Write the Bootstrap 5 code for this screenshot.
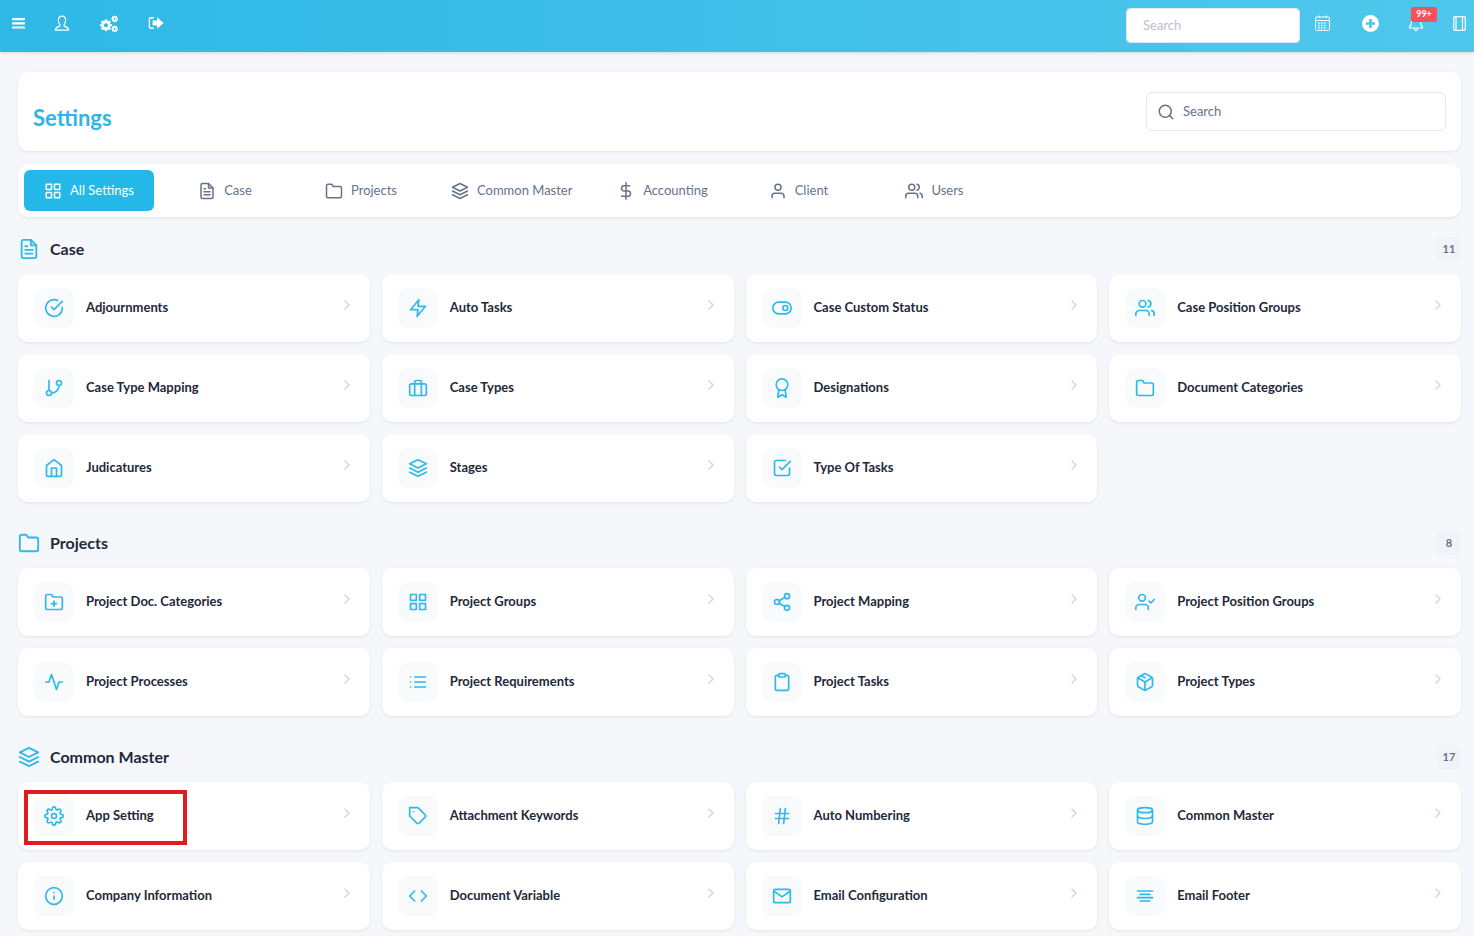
<!DOCTYPE html>
<html lang="en">
<head>
    <meta charset="UTF-8">
    <meta name="viewport" content="width=device-width, initial-scale=1.0">
    <title>Settings</title>
    <link href="https://cdn.jsdelivr.net/npm/bootstrap@5.3.3/dist/css/bootstrap.min.css" rel="stylesheet">
    <style>
        body {
            background: #f5f7fb;
            font-family: Lato, "Noto Sans", sans-serif;
            font-size: 13px;
            color: #1e293b;
        }
        svg.ico {
            fill: none;
            stroke: currentColor;
            stroke-width: 2;
            stroke-linecap: round;
            stroke-linejoin: round;
            flex-shrink: 0;
        }
        /* top bar */
        .topbar {
            height: 52px;
            padding: 0 8px 0 12px;
            background: linear-gradient(90deg, #2fb8e6, #4fc7ec);
            box-shadow: 0 1px 3px rgba(0, 0, 0, .14);
            color: #fff;
        }
        .topbar svg { fill: currentColor; flex-shrink: 0; }
        .top-left { gap: 29px; margin-top: -6px; }
        .top-right { gap: 32px; margin-top: -6px; }
        .top-search {
            width: 174px;
            height: 35px;
            margin: 4px -17px 0 0;
            padding: 0 16px;
            border: 1px solid #e2e8f0;
            border-radius: 4px;
            font-size: 13px;
        }
        .top-search::placeholder { color: #b9bfcc; }
        .bell-wrap { position: relative; line-height: 0; margin: 0 -3px 0 -3px; }
        .bell-count {
            position: absolute;
            top: -8px;
            left: 3px;
            width: 26px;
            height: 15px;
            border-radius: 2px;
            background: #f4525a;
            color: #fff;
            font-size: 9px;
            font-weight: 700;
            line-height: 14px;
            text-align: center;
        }
        /* page */
        .page { padding: 20px 13px 6px 18px; }
        .panel {
            border: 0;
            border-radius: 10px;
            background: #fff;
            box-shadow: 0 1px 3px rgba(15, 23, 42, .09);
        }
        .title-panel { height: 79px; padding: 20px 15px 0; margin-bottom: 13px; }
        .page-title {
            margin: 11px 0 0;
            font-size: 22px;
            font-weight: 700;
            line-height: 30px;
            color: #2fb5e6;
        }
        .find-box {
            width: 300px;
            height: 39px;
            padding: 0 10px;
            gap: 8px;
            border: 1px solid #e2e8f0;
            border-radius: 6px;
            color: #64748b;
        }
        .find-box input {
            width: 100%;
            border: 0;
            outline: 0;
            padding: 0;
            font-size: 13px;
            color: #64748b;
        }
        .find-box input::placeholder { color: #64748b; }
        .tab-panel { height: 53px; padding: 6px; gap: 6px; margin-bottom: 20px; }
        .tab-item {
            min-width: 130px;
            height: 41px;
            padding: 0 19px;
            gap: 8px;
            border-radius: 6px;
            color: #64748b;
            font-size: 13px;
            text-decoration: none;
        }
        .tab-item.active { background: #24b8e8; color: #fff; }
        .sec-head { height: 24px; margin-bottom: 13px; }
        .sec-head h2 {
            margin: 0;
            font-size: 16px;
            font-weight: 700;
            color: #1e293b;
        }
        .sec-icon { color: #30b8ea; margin-right: 10px; }
        .sec-count {
            min-width: 24px;
            height: 24px;
            border-radius: 5px;
            background: #f0f3f8;
            color: #64748b;
            font-size: 11px;
            font-weight: 700;
        }
        .setting-row { --bs-gutter-x: 12px; --bs-gutter-y: 12px; margin-bottom: 29px; }
        .setting-row.last-row { margin-bottom: 0; }
        .setting-card {
            flex-direction: row;
            align-items: center;
            height: 68px;
            padding: 0 15px 0 16px;
        }
        .setting-icon {
            width: 40px;
            height: 40px;
            margin-right: 12px;
            border-radius: 10px;
            background: #f8fafc;
            color: #30b8ea;
        }
        .setting-name { font-size: 13px; font-weight: 700; color: #1e293b; }
        .setting-go { margin: 0 0 6px auto; color: #cbd5e1; }
        .mark-box {
            position: absolute;
            left: 12px;
            top: 8px;
            width: 163px;
            height: 55px;
            border: 4px solid #e21b1f;
            pointer-events: none;
        }
    </style>
</head>
<body>

    <svg width="0" height="0" class="position-absolute">
        <symbol id="i-grid" viewBox="0 0 24 24"><rect x="3" y="3" width="7" height="7"/><rect x="14" y="3" width="7" height="7"/><rect x="14" y="14" width="7" height="7"/><rect x="3" y="14" width="7" height="7"/></symbol>
        <symbol id="i-file" viewBox="0 0 24 24"><path d="M14 2H6a2 2 0 0 0-2 2v16a2 2 0 0 0 2 2h12a2 2 0 0 0 2-2V8z"/><polyline points="14 2 14 8 20 8"/><line x1="16" y1="13" x2="8" y2="13"/><line x1="16" y1="17" x2="8" y2="17"/><polyline points="10 9 9 9 8 9"/></symbol>
        <symbol id="i-folder" viewBox="0 0 24 24"><path d="M22 19a2 2 0 0 1-2 2H4a2 2 0 0 1-2-2V5a2 2 0 0 1 2-2h5l2 3h9a2 2 0 0 1 2 2z"/></symbol>
        <symbol id="i-layers" viewBox="0 0 24 24"><polygon points="12 2 2 7 12 12 22 7 12 2"/><polyline points="2 17 12 22 22 17"/><polyline points="2 12 12 17 22 12"/></symbol>
        <symbol id="i-dollar" viewBox="0 0 24 24"><line x1="12" y1="1" x2="12" y2="23"/><path d="M17 5H9.5a3.5 3.5 0 0 0 0 7h5a3.5 3.5 0 0 1 0 7H6"/></symbol>
        <symbol id="i-user" viewBox="0 0 24 24"><path d="M20 21v-2a4 4 0 0 0-4-4H8a4 4 0 0 0-4 4v2"/><circle cx="12" cy="7" r="4"/></symbol>
        <symbol id="i-users" viewBox="0 0 24 24"><path d="M17 21v-2a4 4 0 0 0-4-4H5a4 4 0 0 0-4 4v2"/><circle cx="9" cy="7" r="4"/><path d="M23 21v-2a4 4 0 0 0-3-3.87"/><path d="M16 3.13a4 4 0 0 1 0 7.75"/></symbol>
        <symbol id="i-check-circle" viewBox="0 0 24 24"><path d="M22 11.08V12a10 10 0 1 1-5.93-9.14"/><polyline points="22 4 12 14.01 9 11.01"/></symbol>
        <symbol id="i-zap" viewBox="0 0 24 24"><polygon points="13 2 3 14 12 14 11 22 21 10 12 10 13 2"/></symbol>
        <symbol id="i-toggle" viewBox="0 0 24 24"><rect x="1" y="5" width="22" height="14" rx="7" ry="7"/><circle cx="16" cy="12" r="3"/></symbol>
        <symbol id="i-branch" viewBox="0 0 24 24"><line x1="6" y1="3" x2="6" y2="15"/><circle cx="18" cy="6" r="3"/><circle cx="6" cy="18" r="3"/><path d="M18 9a9 9 0 0 1-9 9"/></symbol>
        <symbol id="i-briefcase" viewBox="0 0 24 24"><rect x="2" y="7" width="20" height="14" rx="2" ry="2"/><path d="M16 21V5a2 2 0 0 0-2-2h-4a2 2 0 0 0-2 2v16"/></symbol>
        <symbol id="i-award" viewBox="0 0 24 24"><circle cx="12" cy="8" r="7"/><polyline points="8.21 13.89 7 23 12 20 17 23 15.79 13.88"/></symbol>
        <symbol id="i-home" viewBox="0 0 24 24"><path d="M3 9l9-7 9 7v11a2 2 0 0 1-2 2H5a2 2 0 0 1-2-2z"/><polyline points="9 22 9 12 15 12 15 22"/></symbol>
        <symbol id="i-check-square" viewBox="0 0 24 24"><polyline points="9 11 12 14 22 4"/><path d="M21 12v7a2 2 0 0 1-2 2H5a2 2 0 0 1-2-2V5a2 2 0 0 1 2-2h11"/></symbol>
        <symbol id="i-folder-plus" viewBox="0 0 24 24"><path d="M22 19a2 2 0 0 1-2 2H4a2 2 0 0 1-2-2V5a2 2 0 0 1 2-2h5l2 3h9a2 2 0 0 1 2 2z"/><line x1="12" y1="11" x2="12" y2="17"/><line x1="9" y1="14" x2="15" y2="14"/></symbol>
        <symbol id="i-share" viewBox="0 0 24 24"><circle cx="18" cy="5" r="3"/><circle cx="6" cy="12" r="3"/><circle cx="18" cy="19" r="3"/><line x1="8.59" y1="13.51" x2="15.42" y2="17.49"/><line x1="15.41" y1="6.51" x2="8.59" y2="10.49"/></symbol>
        <symbol id="i-user-check" viewBox="0 0 24 24"><path d="M16 21v-2a4 4 0 0 0-4-4H5a4 4 0 0 0-4 4v2"/><circle cx="8.5" cy="7" r="4"/><polyline points="17 11 19 13 23 9"/></symbol>
        <symbol id="i-activity" viewBox="0 0 24 24"><polyline points="22 12 18 12 15 21 9 3 6 12 2 12"/></symbol>
        <symbol id="i-list" viewBox="0 0 24 24"><line x1="8" y1="6" x2="21" y2="6"/><line x1="8" y1="12" x2="21" y2="12"/><line x1="8" y1="18" x2="21" y2="18"/><line x1="3" y1="6" x2="3.01" y2="6"/><line x1="3" y1="12" x2="3.01" y2="12"/><line x1="3" y1="18" x2="3.01" y2="18"/></symbol>
        <symbol id="i-clipboard" viewBox="0 0 24 24"><path d="M16 4h2a2 2 0 0 1 2 2v14a2 2 0 0 1-2 2H6a2 2 0 0 1-2-2V6a2 2 0 0 1 2-2h2"/><rect x="8" y="2" width="8" height="4" rx="1" ry="1"/></symbol>
        <symbol id="i-box" viewBox="0 0 24 24"><line x1="7.5" y1="4.21" x2="12" y2="6.81"/><path d="M21 16V8a2 2 0 0 0-1-1.73l-7-4a2 2 0 0 0-2 0l-7 4A2 2 0 0 0 3 8v8a2 2 0 0 0 1 1.73l7 4a2 2 0 0 0 2 0l7-4A2 2 0 0 0 21 16z"/><polyline points="3.27 6.96 12 12.01 20.73 6.96"/><line x1="12" y1="22.08" x2="12" y2="12"/></symbol>
        <symbol id="i-gear" viewBox="0 0 24 24"><circle cx="12" cy="12" r="3"/><path d="M19.4 15a1.65 1.65 0 0 0 .33 1.82l.06.06a2 2 0 0 1 0 2.83 2 2 0 0 1-2.83 0l-.06-.06a1.65 1.65 0 0 0-1.82-.33 1.65 1.65 0 0 0-1 1.51V21a2 2 0 0 1-2 2 2 2 0 0 1-2-2v-.09A1.65 1.65 0 0 0 9 19.4a1.65 1.65 0 0 0-1.82.33l-.06.06a2 2 0 0 1-2.83 0 2 2 0 0 1 0-2.83l.06-.06a1.65 1.65 0 0 0 .33-1.82 1.65 1.65 0 0 0-1.51-1H3a2 2 0 0 1-2-2 2 2 0 0 1 2-2h.09A1.65 1.65 0 0 0 4.6 9a1.65 1.65 0 0 0-.33-1.82l-.06-.06a2 2 0 0 1 0-2.83 2 2 0 0 1 2.83 0l.06.06a1.65 1.65 0 0 0 1.82.33H9a1.65 1.65 0 0 0 1-1.51V3a2 2 0 0 1 2-2 2 2 0 0 1 2 2v.09a1.65 1.65 0 0 0 1 1.51 1.65 1.65 0 0 0 1.82-.33l.06-.06a2 2 0 0 1 2.83 0 2 2 0 0 1 0 2.83l-.06.06a1.65 1.65 0 0 0-.33 1.82V9a1.65 1.65 0 0 0 1.51 1H21a2 2 0 0 1 2 2 2 2 0 0 1-2 2h-.09a1.65 1.65 0 0 0-1.51 1z"/></symbol>
        <symbol id="i-tag" viewBox="0 0 24 24"><path d="M20.59 13.41l-7.17 7.17a2 2 0 0 1-2.83 0L2 12V2h10l8.59 8.59a2 2 0 0 1 0 2.82z"/><line x1="7" y1="7" x2="7.01" y2="7"/></symbol>
        <symbol id="i-hash" viewBox="0 0 24 24"><line x1="4" y1="9" x2="20" y2="9"/><line x1="4" y1="15" x2="20" y2="15"/><line x1="10" y1="3" x2="8" y2="21"/><line x1="16" y1="3" x2="14" y2="21"/></symbol>
        <symbol id="i-database" viewBox="0 0 24 24"><ellipse cx="12" cy="5" rx="9" ry="3"/><path d="M21 12c0 1.66-4 3-9 3s-9-1.34-9-3"/><path d="M3 5v14c0 1.66 4 3 9 3s9-1.34 9-3V5"/></symbol>
        <symbol id="i-info" viewBox="0 0 24 24"><circle cx="12" cy="12" r="10"/><line x1="12" y1="16" x2="12" y2="12"/><line x1="12" y1="8" x2="12.01" y2="8"/></symbol>
        <symbol id="i-code" viewBox="0 0 24 24"><polyline points="16 18 22 12 16 6"/><polyline points="8 6 2 12 8 18"/></symbol>
        <symbol id="i-mail" viewBox="0 0 24 24"><path d="M4 4h16c1.1 0 2 .9 2 2v12c0 1.1-.9 2-2 2H4c-1.1 0-2-.9-2-2V6c0-1.1.9-2 2-2z"/><polyline points="22 6 12 13 2 6"/></symbol>
        <symbol id="i-align" viewBox="0 0 24 24"><line x1="18" y1="10" x2="6" y2="10"/><line x1="21" y1="6" x2="3" y2="6"/><line x1="21" y1="14" x2="3" y2="14"/><line x1="18" y1="18" x2="6" y2="18"/></symbol>
        <symbol id="i-search" viewBox="0 0 24 24"><circle cx="11" cy="11" r="8"/><line x1="21" y1="21" x2="16.65" y2="16.65"/></symbol>
        <symbol id="i-go" viewBox="0 0 24 24"><polyline points="9 18 15 12 9 6"/></symbol>
    </svg>

    <!-- Top bar -->
    <nav class="topbar d-flex align-items-center justify-content-between">
        <div class="top-left d-flex align-items-center">
            <svg width="13" height="11" viewBox="0 0 13 11"><rect width="13" height="2.2" rx=".6"/><rect y="4.2" width="13" height="2.2" rx=".6"/><rect y="8.4" width="13" height="2.2" rx=".6"/></svg>
            <svg width="16" height="16" viewBox="0 0 16 16" style="fill:none;stroke:currentColor;stroke-width:1.2"><path d="M5.9 9.6c-.9-1-1.5-2.6-1.5-4.2C4.4 3 5.9 1.2 8 1.2s3.600 1.800 3.600 4.200c0 1.600-.6 3.200-1.500 4.200v1.300c.6.500 4.300 1.300 4.500 3.900v.4H1.400v-.4c.2-2.600 3.900-3.400 4.500-3.900z"/></svg>
            <svg width="20" height="17" viewBox="0 0 20 17"><path fill-rule="evenodd" d="M6.200 4.300l1.500-.1.500 1.400 1.200.5 1.300-.7 1.100 1.100-.7 1.300.5 1.200 1.400.5v1.500l-1.400.5-.5 1.200.7 1.300-1.100 1.100-1.300-.7-1.200.5-.5 1.400H6.200l-.5-1.400-1.200-.5-1.300.7-1.100-1.100.7-1.300-.5-1.200L.9 11V9.500l1.400-.5.500-1.200-.7-1.300L3.200 5.400l1.300.7 1.200-.5zM7 8.200a2.100 2.100 0 1 0 0 4.200 2.100 2.100 0 0 0 0-4.200z"/><path fill-rule="evenodd" d="M15.200.4l1 .1.2.8.7.3.700-.5.700.7-.4.700.3.7.8.2v1l-.8.2-.3.7.4.700-.7.700-.7-.4-.7.3-.2.8h-1l-.2-.8-.7-.3-.7.4-.7-.7.4-.7-.3-.7-.8-.2v-1l.8-.2.3-.7-.4-.7.7-.7.7.4.7-.3zm.5 2.500a1 1 0 1 0 0 2 1 1 0 0 0 0-2z"/><path fill-rule="evenodd" d="M15.200 10.400l1 .1.200.8.700.3.700-.5.700.7-.4.700.3.7.8.2v1l-.8.2-.3.700.4.700-.7.700-.7-.4-.7.3-.2.800h-1l-.2-.8-.7-.3-.7.4-.7-.7.4-.7-.3-.7-.8-.2v-1l.8-.2.3-.7-.4-.7.7-.7.7.4.7-.3zm.5 2.500a1 1 0 1 0 0 2 1 1 0 0 0 0-2z"/></svg>
            <svg width="16" height="14" viewBox="0 0 16 14"><path d="M5.800 1.100H3C1.500 1.100.7 2 .7 3.300v7.400c0 1.300.8 2.200 2.300 2.200h2.800v-1.400H3c-.6 0-.9-.3-.9-.8V3.300c0-.5.3-.8.9-.8h2.800z"/><path d="M9.200 1.300L15.600 7l-6.400 5.700V9.400H4.600V4.600h4.600z"/></svg>
        </div>
        <div class="top-right d-flex align-items-center">
            <input class="top-search form-control" type="text" placeholder="Search">
            <svg width="15" height="16" viewBox="0 0 15 16" style="fill:none;stroke:currentColor;stroke-width:1"><rect x=".6" y="2" width="13.800" height="13.400" rx=".8"/><line x1=".6" y1="5.500" x2="14.400" y2="5.500"/><line x1="4" y1=".4" x2="4" y2="3"/><line x1="11" y1=".4" x2="11" y2="3"/><path stroke-width="1.500" stroke-dasharray="1.600 1.300" d="M3 8h9M3 10.500h9M3 13h9"/></svg>
            <svg width="17" height="17" viewBox="0 0 17 17"><path fill-rule="evenodd" d="M8.500 0a8.500 8.500 0 1 1 0 17 8.500 8.500 0 0 1 0-17zM7.200 4v3.200H4v2.600h3.200V13h2.600V9.800H13V7.200H9.800V4z"/></svg>
            <div class="bell-wrap">
                <svg width="16" height="16" viewBox="0 0 16 16" style="fill:none;stroke:currentColor;stroke-width:1.200"><path d="M8 1.500c-2.800 0-4.400 2-4.400 4.600 0 3.400-.9 4.800-2.100 5.900v1h13v-1c-1.200-1.100-2.100-2.500-2.100-5.900 0-2.600-1.600-4.600-4.400-4.600z"/><path d="M6.200 13.500c0 1.100.8 1.800 1.800 1.800s1.800-.7 1.800-1.800"/></svg>
                <span class="bell-count">99+</span>
            </div>
            <svg width="13" height="15" viewBox="0 0 13 15" style="fill:none;stroke:currentColor;stroke-width:1.200"><rect x=".7" y=".7" width="11.600" height="13.600" rx="1.400"/><line x1="3" y1=".7" x2="3" y2="14.300"/><line x1="9.500" y1=".7" x2="9.500" y2="14.300"/></svg>
        </div>
    </nav>

    <main class="page">

        <div class="panel title-panel d-flex justify-content-between align-items-start">
            <h1 class="page-title">Settings</h1>
            <div class="find-box d-flex align-items-center">
                <svg class="ico" width="18" height="18"><use href="#i-search"/></svg>
                <input type="text" placeholder="Search">
            </div>
        </div>

        <div class="panel tab-panel d-flex">
            <a class="tab-item active d-flex align-items-center justify-content-center" href="#"><svg class="ico" width="18" height="18"><use href="#i-grid"/></svg>All Settings</a>
            <a class="tab-item d-flex align-items-center justify-content-center" href="#"><svg class="ico" width="18" height="18"><use href="#i-file"/></svg>Case</a>
            <a class="tab-item d-flex align-items-center justify-content-center" href="#"><svg class="ico" width="18" height="18"><use href="#i-folder"/></svg>Projects</a>
            <a class="tab-item d-flex align-items-center justify-content-center" href="#"><svg class="ico" width="18" height="18"><use href="#i-layers"/></svg>Common Master</a>
            <a class="tab-item d-flex align-items-center justify-content-center" href="#"><svg class="ico" width="18" height="18"><use href="#i-dollar"/></svg>Accounting</a>
            <a class="tab-item d-flex align-items-center justify-content-center" href="#"><svg class="ico" width="18" height="18"><use href="#i-user"/></svg>Client</a>
            <a class="tab-item d-flex align-items-center justify-content-center" href="#"><svg class="ico" width="18" height="18"><use href="#i-users"/></svg>Users</a>
        </div>

        <!-- Case -->
        <div class="sec-head d-flex align-items-center">
            <svg class="ico sec-icon" width="22" height="22"><use href="#i-file"/></svg>
            <h2>Case</h2>
            <span class="sec-count ms-auto d-flex align-items-center justify-content-center">11</span>
        </div>
        <div class="row row-cols-4 setting-row">
            <div class="col"><div class="card panel setting-card"><div class="setting-icon d-flex align-items-center justify-content-center"><svg class="ico" width="20" height="20"><use href="#i-check-circle"/></svg></div><span class="setting-name">Adjournments</span><svg class="ico setting-go" width="16" height="16"><use href="#i-go"/></svg></div></div>
            <div class="col"><div class="card panel setting-card"><div class="setting-icon d-flex align-items-center justify-content-center"><svg class="ico" width="20" height="20"><use href="#i-zap"/></svg></div><span class="setting-name">Auto Tasks</span><svg class="ico setting-go" width="16" height="16"><use href="#i-go"/></svg></div></div>
            <div class="col"><div class="card panel setting-card"><div class="setting-icon d-flex align-items-center justify-content-center"><svg class="ico" width="20" height="20"><use href="#i-toggle"/></svg></div><span class="setting-name">Case Custom Status</span><svg class="ico setting-go" width="16" height="16"><use href="#i-go"/></svg></div></div>
            <div class="col"><div class="card panel setting-card"><div class="setting-icon d-flex align-items-center justify-content-center"><svg class="ico" width="20" height="20"><use href="#i-users"/></svg></div><span class="setting-name">Case Position Groups</span><svg class="ico setting-go" width="16" height="16"><use href="#i-go"/></svg></div></div>
            <div class="col"><div class="card panel setting-card"><div class="setting-icon d-flex align-items-center justify-content-center"><svg class="ico" width="20" height="20"><use href="#i-branch"/></svg></div><span class="setting-name">Case Type Mapping</span><svg class="ico setting-go" width="16" height="16"><use href="#i-go"/></svg></div></div>
            <div class="col"><div class="card panel setting-card"><div class="setting-icon d-flex align-items-center justify-content-center"><svg class="ico" width="20" height="20"><use href="#i-briefcase"/></svg></div><span class="setting-name">Case Types</span><svg class="ico setting-go" width="16" height="16"><use href="#i-go"/></svg></div></div>
            <div class="col"><div class="card panel setting-card"><div class="setting-icon d-flex align-items-center justify-content-center"><svg class="ico" width="20" height="20"><use href="#i-award"/></svg></div><span class="setting-name">Designations</span><svg class="ico setting-go" width="16" height="16"><use href="#i-go"/></svg></div></div>
            <div class="col"><div class="card panel setting-card"><div class="setting-icon d-flex align-items-center justify-content-center"><svg class="ico" width="20" height="20"><use href="#i-folder"/></svg></div><span class="setting-name">Document Categories</span><svg class="ico setting-go" width="16" height="16"><use href="#i-go"/></svg></div></div>
            <div class="col"><div class="card panel setting-card"><div class="setting-icon d-flex align-items-center justify-content-center"><svg class="ico" width="20" height="20"><use href="#i-home"/></svg></div><span class="setting-name">Judicatures</span><svg class="ico setting-go" width="16" height="16"><use href="#i-go"/></svg></div></div>
            <div class="col"><div class="card panel setting-card"><div class="setting-icon d-flex align-items-center justify-content-center"><svg class="ico" width="20" height="20"><use href="#i-layers"/></svg></div><span class="setting-name">Stages</span><svg class="ico setting-go" width="16" height="16"><use href="#i-go"/></svg></div></div>
            <div class="col"><div class="card panel setting-card"><div class="setting-icon d-flex align-items-center justify-content-center"><svg class="ico" width="20" height="20"><use href="#i-check-square"/></svg></div><span class="setting-name">Type Of Tasks</span><svg class="ico setting-go" width="16" height="16"><use href="#i-go"/></svg></div></div>
        </div>

        <!-- Projects -->
        <div class="sec-head d-flex align-items-center">
            <svg class="ico sec-icon" width="22" height="22"><use href="#i-folder"/></svg>
            <h2>Projects</h2>
            <span class="sec-count ms-auto d-flex align-items-center justify-content-center">8</span>
        </div>
        <div class="row row-cols-4 setting-row">
            <div class="col"><div class="card panel setting-card"><div class="setting-icon d-flex align-items-center justify-content-center"><svg class="ico" width="20" height="20"><use href="#i-folder-plus"/></svg></div><span class="setting-name">Project Doc. Categories</span><svg class="ico setting-go" width="16" height="16"><use href="#i-go"/></svg></div></div>
            <div class="col"><div class="card panel setting-card"><div class="setting-icon d-flex align-items-center justify-content-center"><svg class="ico" width="20" height="20"><use href="#i-grid"/></svg></div><span class="setting-name">Project Groups</span><svg class="ico setting-go" width="16" height="16"><use href="#i-go"/></svg></div></div>
            <div class="col"><div class="card panel setting-card"><div class="setting-icon d-flex align-items-center justify-content-center"><svg class="ico" width="20" height="20"><use href="#i-share"/></svg></div><span class="setting-name">Project Mapping</span><svg class="ico setting-go" width="16" height="16"><use href="#i-go"/></svg></div></div>
            <div class="col"><div class="card panel setting-card"><div class="setting-icon d-flex align-items-center justify-content-center"><svg class="ico" width="20" height="20"><use href="#i-user-check"/></svg></div><span class="setting-name">Project Position Groups</span><svg class="ico setting-go" width="16" height="16"><use href="#i-go"/></svg></div></div>
            <div class="col"><div class="card panel setting-card"><div class="setting-icon d-flex align-items-center justify-content-center"><svg class="ico" width="20" height="20"><use href="#i-activity"/></svg></div><span class="setting-name">Project Processes</span><svg class="ico setting-go" width="16" height="16"><use href="#i-go"/></svg></div></div>
            <div class="col"><div class="card panel setting-card"><div class="setting-icon d-flex align-items-center justify-content-center"><svg class="ico" width="20" height="20"><use href="#i-list"/></svg></div><span class="setting-name">Project Requirements</span><svg class="ico setting-go" width="16" height="16"><use href="#i-go"/></svg></div></div>
            <div class="col"><div class="card panel setting-card"><div class="setting-icon d-flex align-items-center justify-content-center"><svg class="ico" width="20" height="20"><use href="#i-clipboard"/></svg></div><span class="setting-name">Project Tasks</span><svg class="ico setting-go" width="16" height="16"><use href="#i-go"/></svg></div></div>
            <div class="col"><div class="card panel setting-card"><div class="setting-icon d-flex align-items-center justify-content-center"><svg class="ico" width="20" height="20"><use href="#i-box"/></svg></div><span class="setting-name">Project Types</span><svg class="ico setting-go" width="16" height="16"><use href="#i-go"/></svg></div></div>
        </div>

        <!-- Common Master -->
        <div class="sec-head d-flex align-items-center">
            <svg class="ico sec-icon" width="22" height="22"><use href="#i-layers"/></svg>
            <h2>Common Master</h2>
            <span class="sec-count ms-auto d-flex align-items-center justify-content-center">17</span>
        </div>
        <div class="row row-cols-4 setting-row last-row">
            <div class="col position-relative"><div class="card panel setting-card"><div class="setting-icon d-flex align-items-center justify-content-center"><svg class="ico" width="20" height="20"><use href="#i-gear"/></svg></div><span class="setting-name">App Setting</span><svg class="ico setting-go" width="16" height="16"><use href="#i-go"/></svg></div><div class="mark-box"></div></div>
            <div class="col"><div class="card panel setting-card"><div class="setting-icon d-flex align-items-center justify-content-center"><svg class="ico" width="20" height="20"><use href="#i-tag"/></svg></div><span class="setting-name">Attachment Keywords</span><svg class="ico setting-go" width="16" height="16"><use href="#i-go"/></svg></div></div>
            <div class="col"><div class="card panel setting-card"><div class="setting-icon d-flex align-items-center justify-content-center"><svg class="ico" width="20" height="20"><use href="#i-hash"/></svg></div><span class="setting-name">Auto Numbering</span><svg class="ico setting-go" width="16" height="16"><use href="#i-go"/></svg></div></div>
            <div class="col"><div class="card panel setting-card"><div class="setting-icon d-flex align-items-center justify-content-center"><svg class="ico" width="20" height="20"><use href="#i-database"/></svg></div><span class="setting-name">Common Master</span><svg class="ico setting-go" width="16" height="16"><use href="#i-go"/></svg></div></div>
            <div class="col"><div class="card panel setting-card"><div class="setting-icon d-flex align-items-center justify-content-center"><svg class="ico" width="20" height="20"><use href="#i-info"/></svg></div><span class="setting-name">Company Information</span><svg class="ico setting-go" width="16" height="16"><use href="#i-go"/></svg></div></div>
            <div class="col"><div class="card panel setting-card"><div class="setting-icon d-flex align-items-center justify-content-center"><svg class="ico" width="20" height="20"><use href="#i-code"/></svg></div><span class="setting-name">Document Variable</span><svg class="ico setting-go" width="16" height="16"><use href="#i-go"/></svg></div></div>
            <div class="col"><div class="card panel setting-card"><div class="setting-icon d-flex align-items-center justify-content-center"><svg class="ico" width="20" height="20"><use href="#i-mail"/></svg></div><span class="setting-name">Email Configuration</span><svg class="ico setting-go" width="16" height="16"><use href="#i-go"/></svg></div></div>
            <div class="col"><div class="card panel setting-card"><div class="setting-icon d-flex align-items-center justify-content-center"><svg class="ico" width="20" height="20"><use href="#i-align"/></svg></div><span class="setting-name">Email Footer</span><svg class="ico setting-go" width="16" height="16"><use href="#i-go"/></svg></div></div>
        </div>
    </main>

    <script src="https://cdn.jsdelivr.net/npm/bootstrap@5.3.3/dist/js/bootstrap.bundle.min.js"></script>
</body>
</html>
